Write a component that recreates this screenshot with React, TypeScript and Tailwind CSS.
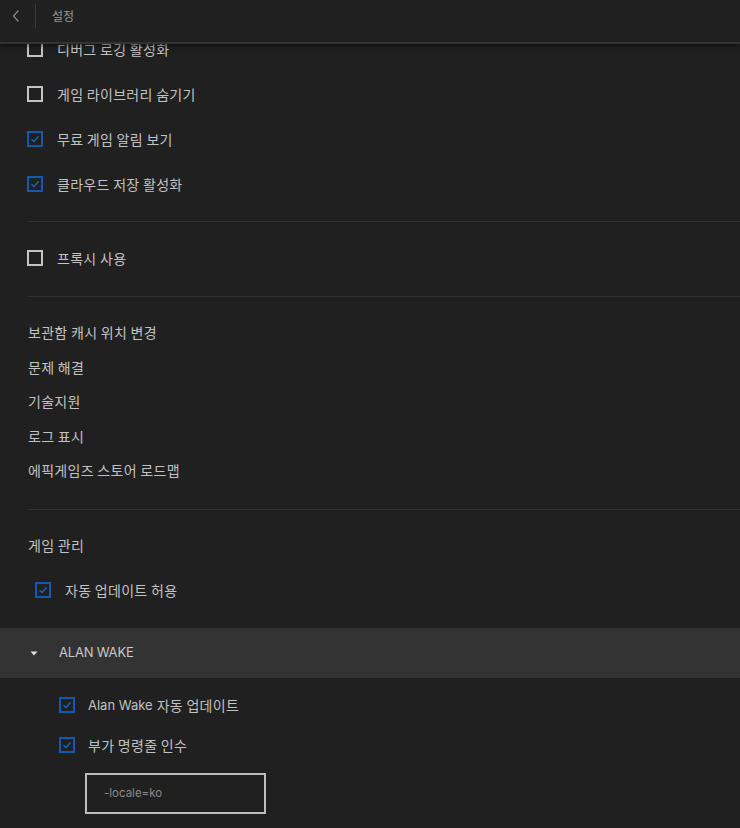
import React from 'react';

const font = { fontFamily: '"Noto Sans CJK KR", Inter, "Noto Sans", sans-serif' };
const latin = { fontFamily: 'Inter, "Noto Sans", sans-serif' };

function Box({ checked }: { checked: boolean }) {
  if (!checked) {
    return <span className="w-4 h-4 shrink-0 border-2 border-[#c4c4c4]" />;
  }
  return (
    <span className="w-4 h-4 shrink-0 border-2 border-[#0f5bb4] flex items-center justify-center">
      <svg width="10" height="8" viewBox="0 0 10 8" fill="none">
        <path d="M1.5 4.2 L4 6.5 L8.5 1.5" stroke="#1a66c2" strokeWidth="1.3" />
      </svg>
    </span>
  );
}

function CheckRow({ label, checked, className = '', prefix }: { label: string; checked: boolean; className?: string; prefix?: string }) {
  return (
    <div className={`flex items-center h-4 ${className}`}>
      <Box checked={checked} />
      <span className="flex items-center">
        {prefix && <span className="text-[13px] text-[#c2c2c2] leading-none mr-[4px]" style={latin}>{prefix}</span>}
        <span className="text-[14px] tracking-[0.3px] text-[#c2c2c2] leading-none">{label}</span>
      </span>
    </div>
  );
}

const links = ['보관함 캐시 위치 변경', '문제 해결', '기술지원', '로그 표시', '에픽게임즈 스토어 로드맵'];

export default function App() {
  return (
    <div className="w-[740px] h-[828px] bg-[#202020] overflow-hidden relative" style={font}>
      <div className="absolute top-0 left-0 right-0 h-[44px] bg-[#202020] border-b-2 border-[#333333] shadow-[0_2px_4px_rgba(0,0,0,0.5)] z-10 flex items-start">
        <div className="h-[32px] flex items-center pl-[11px]">
          <svg width="10" height="14" viewBox="0 0 10 14" fill="none">
            <path d="M7.5 1.5 L2.5 7 L7.5 12.5" stroke="#8a8a8a" strokeWidth="1.2" />
          </svg>
        </div>
        <div className="w-px h-[24px] bg-[#3a3a3a] mt-[4px] ml-[14px]" />
        <div className="h-[32px] flex items-center ml-[16px] text-[12px] text-[#9a9a9a]">설정</div>
      </div>

      <div className="pl-[27px] pt-[41px]">
        <div className="flex flex-col gap-[29px]">
          <CheckRow label="디버그 로깅 활성화" checked={false} className="gap-[14px]" />
          <CheckRow label="게임 라이브러리 숨기기" checked={false} className="gap-[14px]" />
          <CheckRow label="무료 게임 알림 보기" checked className="gap-[14px]" />
          <CheckRow label="클라우드 저장 활성화" checked className="gap-[14px]" />
        </div>
        <div className="h-px bg-[#333333] mt-[29px] ml-px" />
        <CheckRow label="프록시 사용" checked={false} className="gap-[14px] mt-[28px]" />
        <div className="h-px bg-[#333333] mt-[30px] ml-px" />
        <div className="flex flex-col gap-[18.5px] mt-[27px] pl-px">
          {links.map((l) => (
            <div key={l} className="text-[14px] tracking-[0.3px] text-[#c2c2c2] leading-[16px]">{l}</div>
          ))}
        </div>
        <div className="h-px bg-[#333333] mt-[31px] ml-px" />
        <div className="text-[14px] tracking-[0.3px] text-[#c2c2c2] leading-[16px] mt-[27px] pl-px">게임 관리</div>
        <CheckRow label="자동 업데이트 허용" checked className="gap-[14px] mt-[29px] pl-[8px]" />
      </div>

      <div className="mt-[30px] h-[50px] bg-[#333333] flex items-center pl-[30px]">
        <svg width="8" height="5" viewBox="0 0 8 5">
          <path d="M0.5 0.5 H7.5 L4 4.5 Z" fill="#e0e0e0" />
        </svg>
        <span className="ml-[21px] text-[13px] text-[#c8c8c8] tracking-[-0.2px]" style={latin}>ALAN WAKE</span>
      </div>

      <div className="pl-[59px] pt-[19px]">
        <CheckRow prefix="Alan Wake" label="자동 업데이트" checked className="gap-[13px]" />
        <CheckRow label="부가 명령줄 인수" checked className="mt-[24px] gap-[13px]" />
        <div className="mt-[20px] ml-[26px] w-[181px] h-[41px] border-2 border-[#bdbdbd] flex items-center pl-[17px] text-[11.5px] text-[#8a8a8a]" style={latin}>
          -locale=ko
        </div>
      </div>
    </div>
  );
}
